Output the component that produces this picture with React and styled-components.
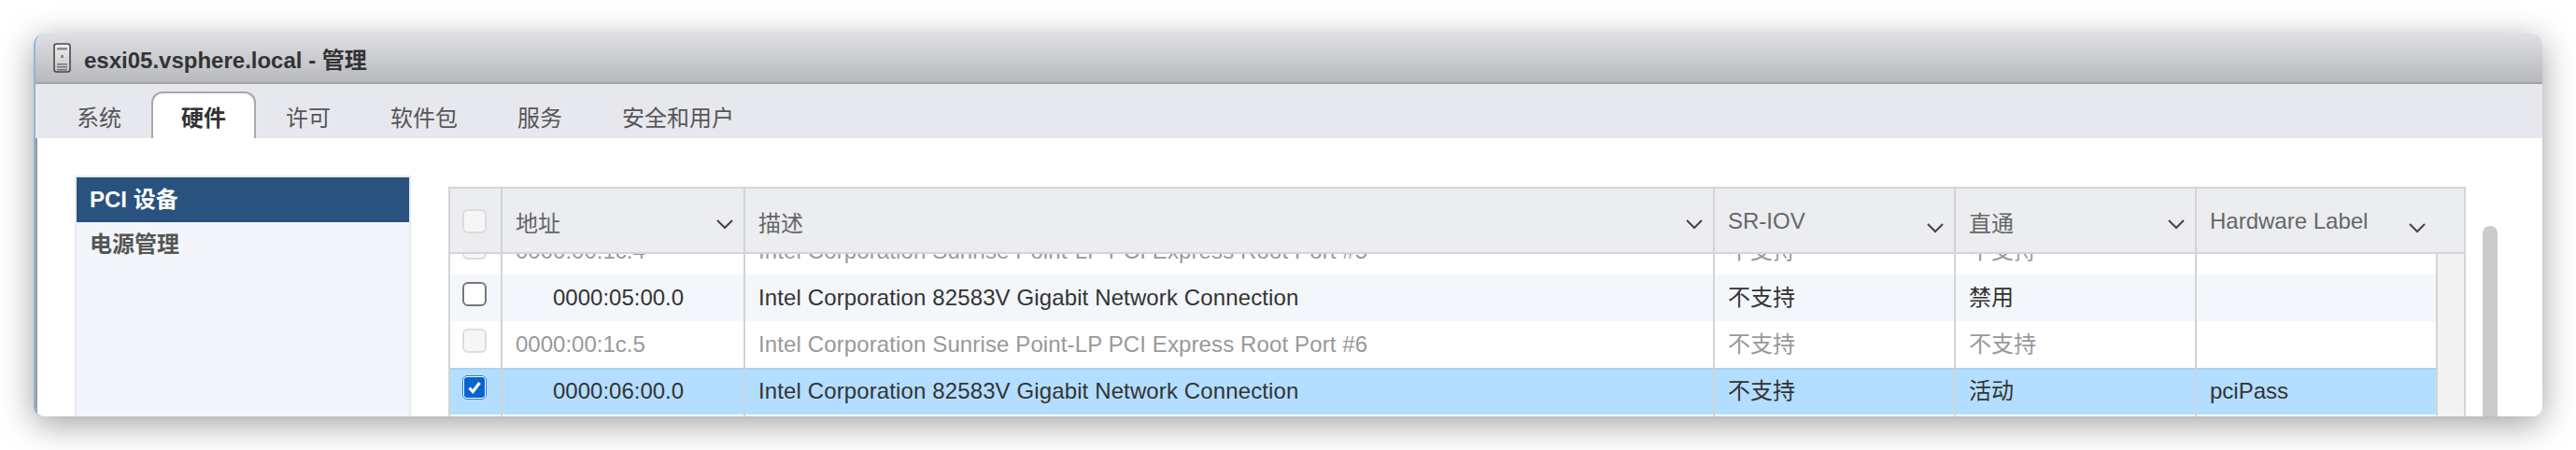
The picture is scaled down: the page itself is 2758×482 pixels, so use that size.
import styled, { createGlobalStyle } from "styled-components";

const GlobalStyle = createGlobalStyle`
  html, body {
    margin: 0;
    background: #fff;
    overflow: hidden;
  }
  body {
    font-family: "Liberation Sans", "Noto Sans CJK SC", sans-serif;
    font-size: 24px;
    color: #333;
  }
`;

const tabs = ["系统", "硬件", "许可", "软件包", "服务", "安全和用户"];

const columns = [
  { label: "地址" },
  { label: "描述" },
  { label: "SR-IOV", low: true },
  { label: "直通" },
  { label: "Hardware Label", low: true, last: true },
];

const rows = [
  { addr: "0000:00:1c.4", desc: "Intel Corporation Sunrise Point-LP PCI Express Root Port #5", sriov: "不支持", pass: "不支持", label: "", disabled: true },
  { addr: "0000:05:00.0", desc: "Intel Corporation 82583V Gigabit Network Connection", sriov: "不支持", pass: "禁用", label: "", indent: true, alt: true },
  { addr: "0000:00:1c.5", desc: "Intel Corporation Sunrise Point-LP PCI Express Root Port #6", sriov: "不支持", pass: "不支持", label: "", disabled: true },
  { addr: "0000:06:00.0", desc: "Intel Corporation 82583V Gigabit Network Connection", sriov: "不支持", pass: "活动", label: "pciPass", indent: true, selected: true },
  { addr: "", desc: "", sriov: "", pass: "", label: "" },
];

const Page = styled.div`
  height: 482px;
  padding: 36px;
  box-sizing: border-box;
`;

const Window = styled.div`
  height: 410px;
  box-sizing: border-box;
  display: flex;
  flex-direction: column;
  overflow: hidden;
  background: #fff;
  border-left: 2px solid #8fb6d6;
  border-radius: 12px 12px 10px 10px;
  box-shadow: 0 8px 36px rgba(0, 0, 0, 0.38);
`;

const TitleBar = styled.div`
  flex: none;
  height: 52px;
  display: flex;
  align-items: center;
  gap: 14px;
  padding-left: 19px;
  background: linear-gradient(#dfe0e5, #b8b9bc);
  border-bottom: 2px solid #a2a3a7;
`;

const Title = styled.h1`
  margin: 0;
  font-size: 24px;
  font-weight: 700;
  color: #333;
`;

const TabStrip = styled.div`
  flex: none;
  height: 58px;
  box-sizing: border-box;
  display: flex;
  align-items: flex-end;
  padding-left: 12px;
  background: #e7e8ee;
`;

const Tab = styled.div`
  height: 50px;
  box-sizing: border-box;
  padding: 0 30px;
  display: flex;
  align-items: center;
  border: 2px solid ${(p) => (p.$active ? "#a9a9a9" : "transparent")};
  border-bottom: 0;
  border-radius: 12px 12px 0 0;
  background: ${(p) => (p.$active ? "#fff" : "transparent")};
  color: ${(p) => (p.$active ? "#333" : "#565656")};
  font-weight: ${(p) => (p.$active ? 700 : 400)};
`;

const Content = styled.div`
  flex: 1;
  min-height: 0;
  display: flex;
  padding: 40px 48px 0 40px;
  border-left: 2px solid #9a9a9a;
`;

const Sidebar = styled.nav`
  flex: none;
  width: 360px;
  box-sizing: border-box;
  margin-right: 40px;
  background: #f2f5fa;
  border: 2px solid #e6ebf2;
  border-bottom: 0;
`;

const SideItem = styled.div`
  height: 48px;
  box-sizing: border-box;
  padding: 0 0 6px 14px;
  display: flex;
  align-items: center;
  font-weight: 700;
  background: ${(p) => (p.$active ? "#2a527e" : "transparent")};
  color: ${(p) => (p.$active ? "#fff" : "#555")};
`;

const Table = styled.div`
  flex: none;
  width: 2160px;
  box-sizing: border-box;
  margin-top: 12px;
  display: flex;
  flex-direction: column;
  min-height: 0;
  border: 2px solid #d5d5d5;
  border-bottom: 0;
`;

const Header = styled.div`
  flex: none;
  height: 70px;
  box-sizing: border-box;
  display: grid;
  grid-template-columns: 56px 260px 1038px 258px 258px 1fr;
  background: #ebedf0;
  border-bottom: 2px solid #d5d5d5;
`;

const HeadCell = styled.div`
  display: flex;
  align-items: center;
  justify-content: space-between;
  padding: 2px 10px 0 14px;
  color: #666;
  border-right: ${(p) => (p.$last ? "0" : "2px solid #d3d3d3")};
  padding-right: ${(p) => (p.$last ? "40px" : "10px")};
`;

const CheckCell = styled.div`
  display: flex;
  justify-content: center;
  box-sizing: border-box;
  border-right: 2px solid #d3d3d3;
  padding-top: ${(p) => (p.$head ? "22px" : "8px")};
  padding-right: 2px;
`;

const Chevron = styled.svg`
  flex: none;
  width: 20px;
  height: 12px;
  fill: none;
  stroke: #444;
  stroke-width: 2;
  margin-top: ${(p) => (p.$low ? "14px" : "6px")};
`;

const Box = styled.span`
  display: block;
  width: 26px;
  height: 26px;
  box-sizing: border-box;
  border-radius: 6px;
  border: 2px solid ${(p) => (p.$disabled ? "#dcdcdc" : "#777")};
  background: ${(p) => (p.$disabled ? "#f6f6f6" : "#fff")};
`;

const CheckedBox = styled.span`
  display: flex;
  align-items: center;
  justify-content: center;
  width: 26px;
  height: 26px;
  box-sizing: border-box;
  border-radius: 5px;
  border: 2px solid #fff;
  outline: 1px solid #1e78f0;
  outline-offset: -1px;
  background: #0a62ce;
  svg {
    width: 18px;
    height: 18px;
  }
`;

const BodyArea = styled.div`
  flex: 1;
  min-height: 0;
  display: flex;
  overflow: hidden;
`;

const Rows = styled.div`
  flex: none;
  width: 2126px;
  margin-top: -28px;
`;

const Row = styled.div`
  height: 50px;
  display: grid;
  grid-template-columns: 56px 260px 1038px 258px 258px 1fr;
  background: ${(p) => (p.$selected ? "#b3deff" : p.$alt ? "#f3f6fb" : "#fff")};
  box-shadow: ${(p) => (p.$selected ? "inset 0 2px 1px #a6d2f3" : "none")};
  color: ${(p) => (p.$disabled ? "#999" : "#333")};
`;

const Cell = styled.div`
  display: flex;
  align-items: center;
  box-sizing: border-box;
  padding-left: ${(p) => (p.$indent ? "54px" : "14px")};
  border-right: ${(p) => (p.$last ? "0" : "2px solid #d3d3d3")};
  white-space: nowrap;
  overflow: hidden;
`;

const DescCell = styled(Cell)`
  letter-spacing: 0.12px;
`;

const StatusCell = styled(Cell)`
  padding-bottom: 5px;
`;

const Gutter = styled.div`
  flex: 1;
  background: #f3f3f3;
  border-left: 2px solid #d5d5d5;
`;

const ScrollThumb = styled.div`
  flex: none;
  width: 16px;
  margin: 54px 0 0 18px;
  background: #cbcbcb;
  border-radius: 8px 8px 0 0;
`;

function ServerIcon() {
  return (
    <svg width="19" height="32" viewBox="0 0 19 32">
      <defs>
        <linearGradient id="case" x1="0" y1="0" x2="0" y2="1">
          <stop offset="0" stopColor="#f0f0f0" />
          <stop offset="1" stopColor="#c4c4c4" />
        </linearGradient>
      </defs>
      <rect x="1" y="1" width="17" height="30" rx="2.5" fill="url(#case)" stroke="#4a4a4a" strokeWidth="1.6" />
      <rect x="4" y="5" width="11" height="2.5" fill="#8a8a8a" />
      <rect x="8" y="13" width="3" height="3" fill="#888" />
      <rect x="4" y="22" width="11" height="1.5" fill="#777" />
      <rect x="4" y="25" width="11" height="1.5" fill="#777" />
      <rect x="4" y="28" width="11" height="1.5" fill="#777" />
    </svg>
  );
}

function SortIcon({ low }) {
  return (
    <Chevron $low={low} viewBox="0 0 20 12">
      <path d="M2 2l8 8 8-8" />
    </Chevron>
  );
}

function RowCheck({ row }) {
  if (row.selected) {
    return (
      <CheckedBox>
        <svg viewBox="0 0 18 18">
          <path d="M3.5 9.5l3.8 4L14.5 4" fill="none" stroke="#fff" strokeWidth="3.2" />
        </svg>
      </CheckedBox>
    );
  }
  return <Box $disabled={row.disabled} />;
}

export default function App() {
  return (
    <Page>
      <GlobalStyle />
      <Window>
        <TitleBar>
          <ServerIcon />
          <Title>esxi05.vsphere.local - 管理</Title>
        </TitleBar>

        <TabStrip>
          {tabs.map((tab) => (
            <Tab key={tab} $active={tab === "硬件"}>{tab}</Tab>
          ))}
        </TabStrip>

        <Content>
          <Sidebar>
            <SideItem $active>PCI 设备</SideItem>
            <SideItem>电源管理</SideItem>
          </Sidebar>

          <Table>
            <Header>
              <CheckCell $head>
                <Box $disabled />
              </CheckCell>
              {columns.map((col) => (
                <HeadCell key={col.label} $last={col.last}>
                  {col.label}
                  <SortIcon low={col.low} />
                </HeadCell>
              ))}
            </Header>
            <BodyArea>
              <Rows>
                {rows.map((row, i) => (
                  <Row key={i} $alt={row.alt} $selected={row.selected} $disabled={row.disabled}>
                    <CheckCell>{row.addr && <RowCheck row={row} />}</CheckCell>
                    <Cell $indent={row.indent}>{row.addr}</Cell>
                    <DescCell>{row.desc}</DescCell>
                    <StatusCell>{row.sriov}</StatusCell>
                    <StatusCell>{row.pass}</StatusCell>
                    <Cell $last>{row.label}</Cell>
                  </Row>
                ))}
              </Rows>
              <Gutter />
            </BodyArea>
          </Table>

          <ScrollThumb />
        </Content>
      </Window>
    </Page>
  );
}
